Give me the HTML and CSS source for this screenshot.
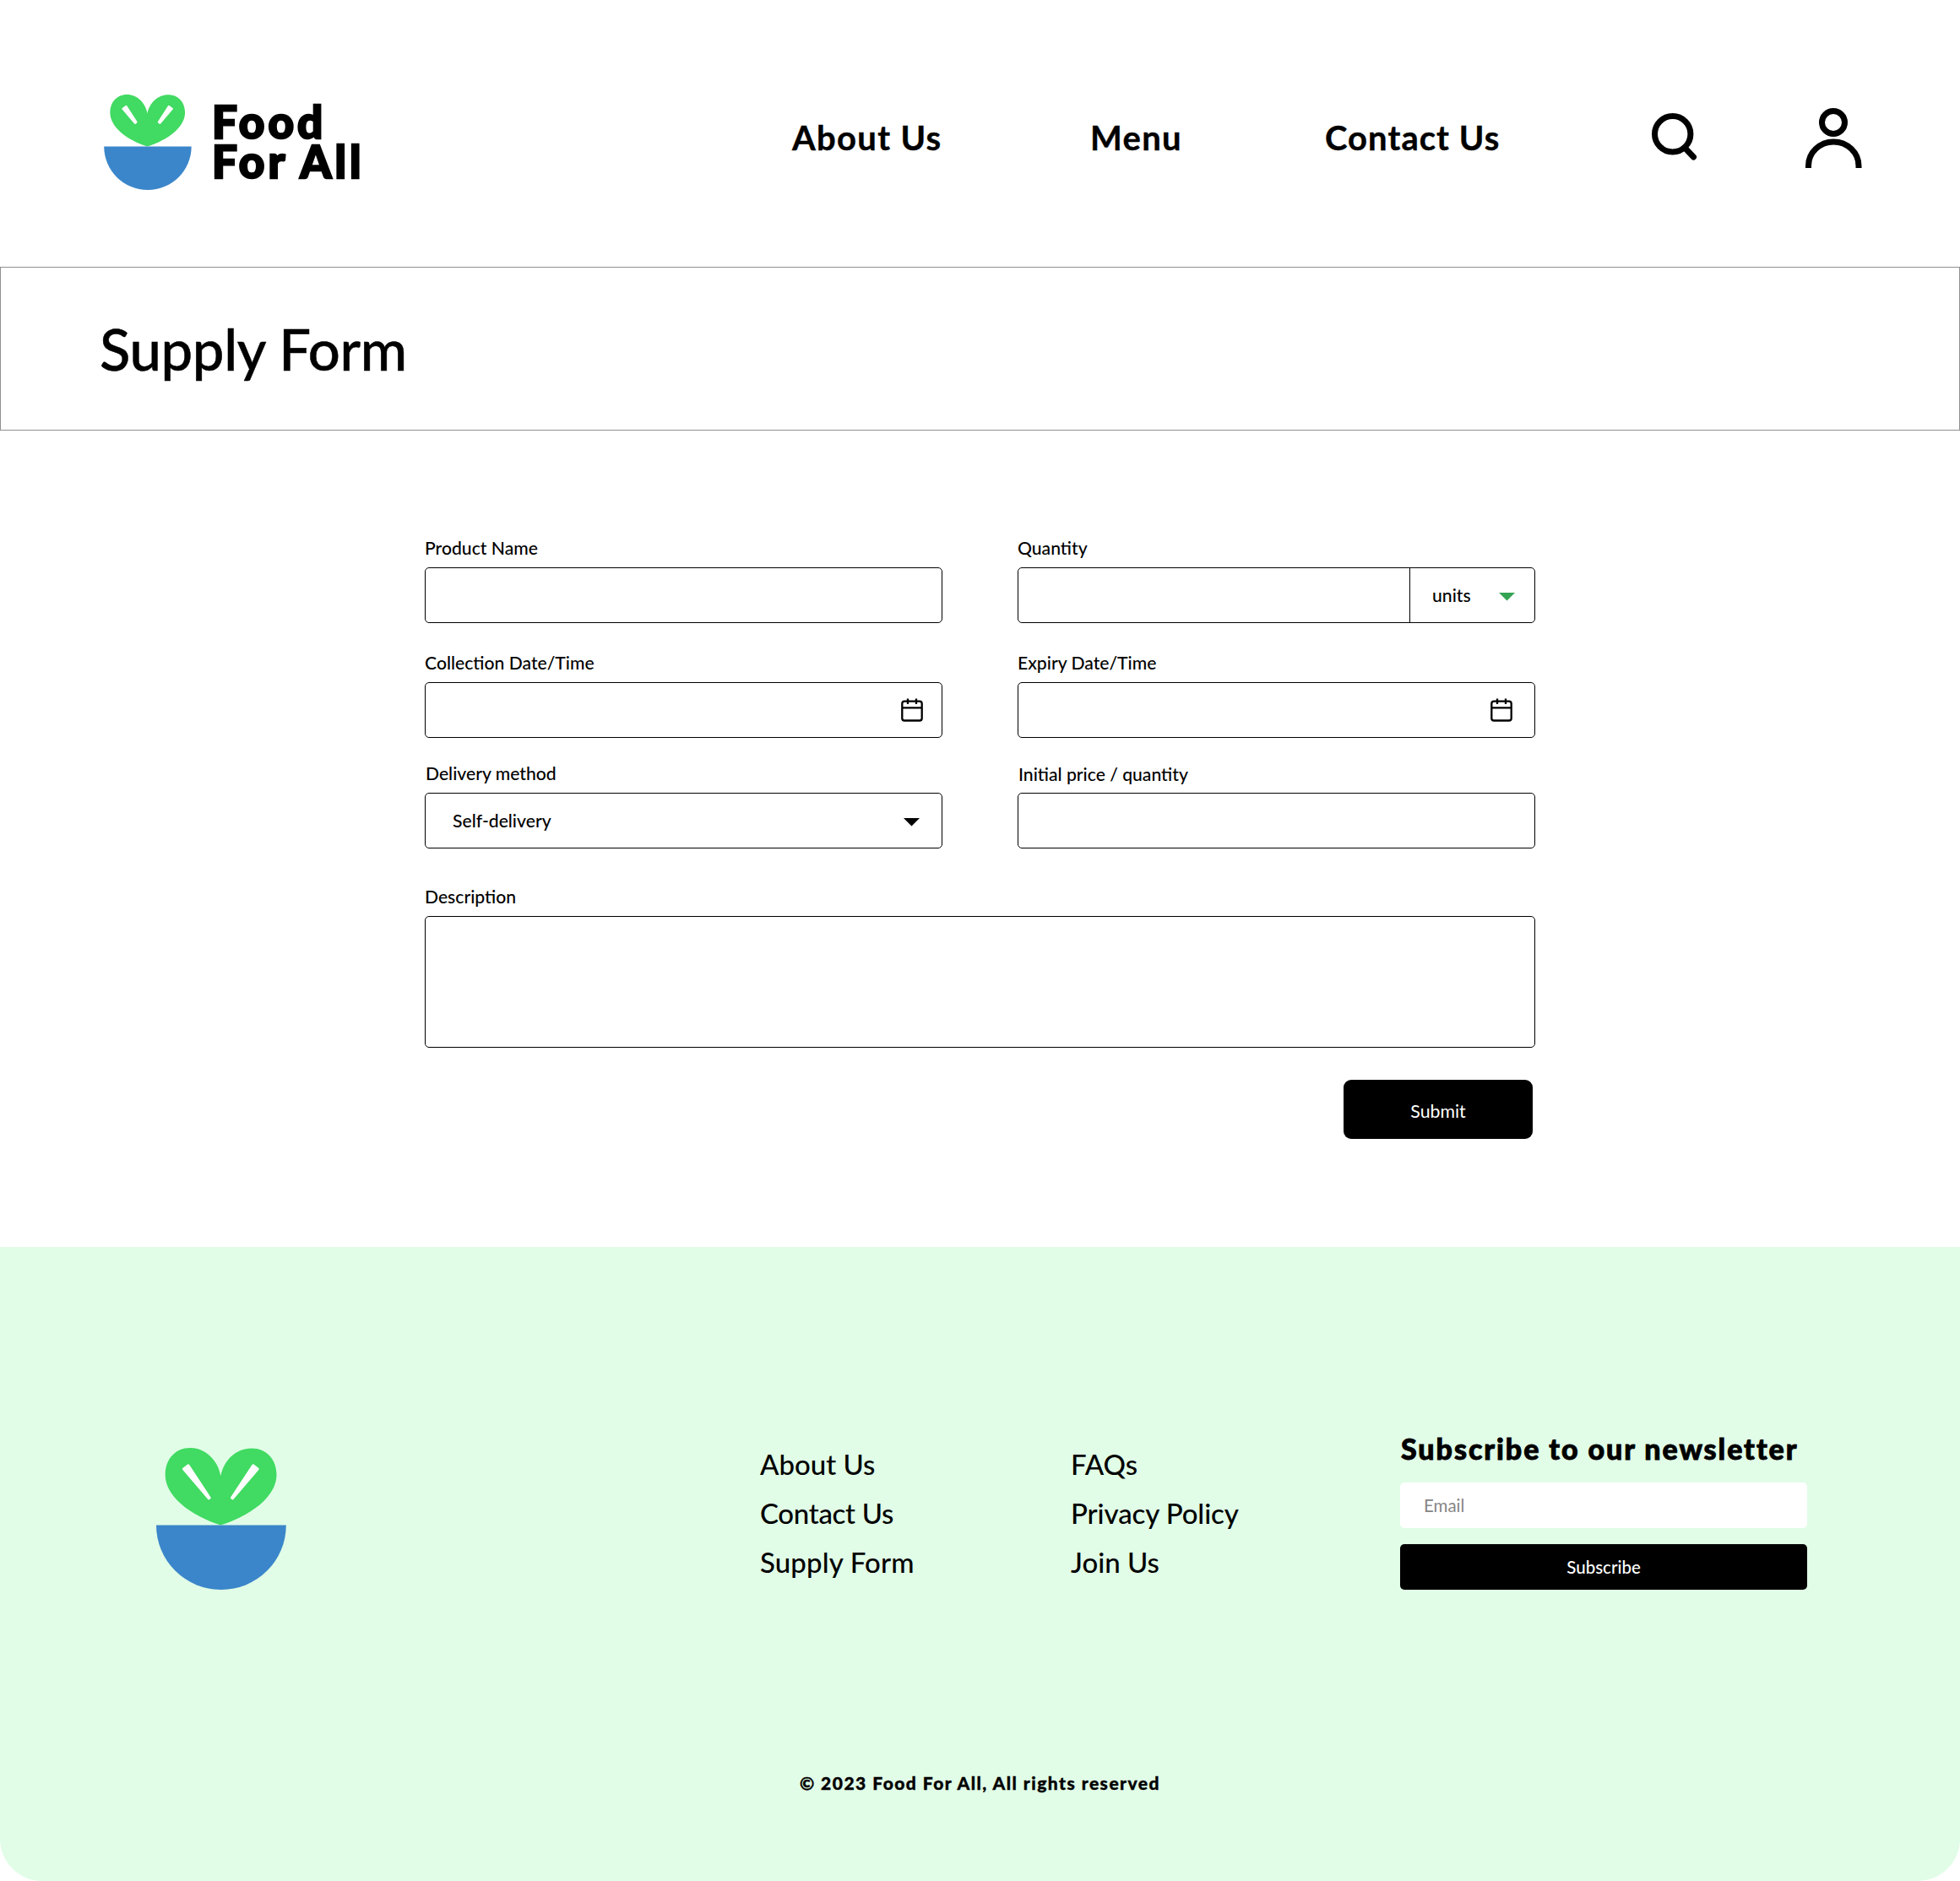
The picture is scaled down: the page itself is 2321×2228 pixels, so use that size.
FILE: index.html
```html
<!DOCTYPE html>
<html lang="en">
<head>
<meta charset="utf-8">
<title>Supply Form - Food For All</title>
<link rel="stylesheet" href="styles.css">
</head>
<body>
<header class="header">
  <a class="brand">
    <svg class="brand-mark" viewBox="0 0 154 168">
      <path fill="#41DA62" d="M76.3 91.5C40 80 10.7 57 10.7 32C10.7 13 23 0 40 0C59 0 73 15 76.3 33.3C80 15 94 .5 113 .5C130 .5 142.5 13 142.5 32C142.5 57 113 80 76.3 91.5Z"/>
      <path fill="#3B86CA" d="M0 91.5H153.8A76.9 76.5 0 0 1 0 91.5Z"/>
      <path fill="#fff" stroke="#fff" stroke-width="3" stroke-linejoin="round" d="M33 25L39 20.5L57 48.5L54.5 50.5ZM120 25L114 20.5L96 48.5L98.500 50.5Z"/>
    </svg>
    <span class="brand-name">Food<br>For All</span>
  </a>
  <a class="nav-link">About Us</a>
  <a class="nav-link">Menu</a>
  <a class="nav-link nav-contact">Contact Us</a>
  <svg class="icon-search" viewBox="0 0 54 58" fill="none" stroke="#000" stroke-width="7">
    <circle cx="24.700" cy="24.700" r="21.200"/>
    <path stroke-linecap="round" d="M40 42L49.500 52"/>
  </svg>
  <svg class="icon-user" viewBox="0 0 67 72" fill="none" stroke="#000" stroke-width="7">
    <circle cx="33" cy="17" r="13.500"/>
    <path d="M3.500 71V68.500A29.700 28.500 0 0 1 63 68.500V71"/>
  </svg>
</header>
<section class="title-bar"><h1 class="title">Supply Form</h1></section>
<main class="main">
  <form class="form">
    <div class="row">
      <div class="field"><label class="label" for="product">Product Name</label><input class="box" id="product"></div>
      <div class="field"><label class="label">Quantity</label>
        <div class="box combo"><span class="combo-units">units<svg class="caret" viewBox="0 0 19 10"><path fill="#34A353" d="M0 0H19L9.500 9.500Z"/></svg></span></div></div>
    </div>
    <div class="row row-dates">
      <div class="field"><label class="label">Collection Date/Time</label>
        <div class="box picker"><svg class="calendar" viewBox="0 0 26 28" fill="none" stroke="#000" stroke-width="2.300"><rect x="1.300" y="3.700" width="23.400" height="22.800" rx="2.800"/><path d="M1.300 11.300H24.700M8 .5V7M18 .5V7"/></svg></div></div>
      <div class="field"><label class="label">Expiry Date/Time</label>
        <div class="box picker picker-expiry"><svg class="calendar" viewBox="0 0 26 28" fill="none" stroke="#000" stroke-width="2.300"><rect x="1.300" y="3.700" width="23.400" height="22.800" rx="2.800"/><path d="M1.300 11.300H24.700M8 .5V7M18 .5V7"/></svg></div></div>
    </div>
    <div class="row row-delivery">
      <div class="field"><label class="label label-delivery">Delivery method</label>
        <div class="box select">Self-delivery<svg class="caret" viewBox="0 0 19 10"><path d="M0 0H19L9.500 9.500Z"/></svg></div></div>
      <div class="field"><label class="label label-price" for="price">Initial price / quantity</label><input class="box" id="price"></div>
    </div>
    <div class="field field-description"><label class="label" for="description">Description</label><textarea class="box description" id="description"></textarea></div>
    <button class="submit" type="button">Submit</button>
  </form>
</main>
<footer class="footer">
  <div class="footer-top">
    <svg class="footer-mark" viewBox="0 0 154 168">
      <path fill="#41DA62" d="M76.3 91.5C40 80 10.7 57 10.7 32C10.7 13 23 0 40 0C59 0 73 15 76.3 33.3C80 15 94 .5 113 .5C130 .5 142.5 13 142.5 32C142.5 57 113 80 76.3 91.5Z"/>
      <path fill="#3B86CA" d="M0 91.5H153.8A76.9 76.5 0 0 1 0 91.5Z"/>
      <path fill="#fff" stroke="#fff" stroke-width="3" stroke-linejoin="round" d="M32.500 25L38 20.800L63.200 59L62.200 59.800ZM120.200 25L114.700 20.800L89.500 59L90.500 59.800Z"/>
    </svg>
    <nav class="links">
      <a>About Us</a>
      <a class="link-contact">Contact Us</a>
      <a class="link-supply">Supply Form</a>
    </nav>
    <nav class="links">
      <a>FAQs</a>
      <a class="link-privacy">Privacy Policy</a>
      <a>Join Us</a>
    </nav>
    <div class="newsletter">
      <h2 class="newsletter-title">Subscribe to our newsletter</h2>
      <div class="email">Email</div>
      <button class="subscribe" type="button">Subscribe</button>
    </div>
  </div>
  <p class="copyright">© 2023 Food For All, All rights reserved</p>
</footer>
</body>
</html>
```
FILE: styles.css
```css
* { box-sizing: border-box; }
body { margin: 0; background: #fff; color: #000; font-family: Lato, sans-serif; }
a { color: inherit; text-decoration: none; }

.header {
  display: grid;
  grid-template-columns: 815px 353px 278px 387px 182px 67px;
  height: 316px;
  padding: 112px 0 0 123px;
  align-items: start;
}
.brand { display: flex; }
.brand-mark { width: 104px; height: 113px; }
.brand-name { margin: 8px 0 0 24px; font-size: 53px; font-weight: 900; line-height: 47px; letter-spacing: 4.1px; white-space: nowrap; -webkit-text-stroke: 2.4px #000; }
.nav-link { padding-top: 26px; font-size: 40px; font-weight: 700; line-height: 50px; letter-spacing: 1.3px; white-space: nowrap; -webkit-text-stroke: 0.4px #000; }
.nav-contact { letter-spacing: 1.05px; }
.icon-search { width: 54px; height: 58px; margin-top: 22px; }
.icon-user { width: 67px; height: 72px; margin-top: 16px; }

.title-bar { height: 194px; padding: 48px 0 0 117px; border: 1px solid #909090; }
.title { margin: 0; font-size: 67px; font-weight: 500; line-height: 96px; letter-spacing: -0.35px; -webkit-text-stroke: 0.5px #000; }

.main { height: 967px; padding: 127px 0 0 503px; }
.form { display: flex; flex-direction: column; width: 1315px; font-size: 21.15px; font-weight: 500; line-height: 24px; }
.row { display: grid; grid-template-columns: 613px 613px; column-gap: 89px; }
.row-dates { margin-top: 35px; }
.row-delivery { margin-top: 30px; }
.field { display: flex; flex-direction: column; }
.field-description { margin-top: 45px; }
.label { height: 35px; }
.label-delivery { padding-left: 1px; }
.label-price { padding: 1px 0 0 1px; }
.box { display: flex; align-items: center; width: 100%; height: 66px; border: 1px solid #000; border-radius: 5px; background: #fff; }
.combo { justify-content: flex-end; }
.combo-units { display: flex; align-items: center; justify-content: space-between; width: 148px; height: 64px; padding: 0 23px 1px 26px; border-left: 1px solid #000; }
.caret { width: 19px; height: 10px; margin-top: 5px; }
.picker { justify-content: flex-end; padding-right: 22.5px; }
.picker-expiry { padding-right: 26px; }
.calendar { width: 26px; height: 28px; }
.select { justify-content: space-between; padding: 0 26px 1px 32px; }
.description { height: 156px; resize: none; }
.submit { align-self: flex-end; width: 224px; height: 70px; margin: 38px 3px 0 0; padding: 3px 0 0; border: 0; border-radius: 9px; background: #000; color: #fff; font: 400 21.3px/24px Lato, sans-serif; }

.footer { height: 751px; padding-top: 217px; border-radius: 0 0 50px 50px; background: #E1FDE7; }
.footer-top { display: grid; grid-template-columns: 715px 368px 390px 482px; height: 393px; padding-left: 185px; align-items: start; }
.footer-mark { width: 154px; height: 168px; margin-top: 21px; }
.links { display: flex; flex-direction: column; padding-top: 11px; font-size: 33px; font-weight: 500; line-height: 58px; white-space: nowrap; }
.link-contact { letter-spacing: -0.3px; }
.link-supply { letter-spacing: 0.15px; }
.link-privacy { letter-spacing: -0.1px; }
.newsletter { display: flex; flex-direction: column; }
.newsletter-title { margin: 0; height: 62px; padding-left: 1px; font-size: 34px; font-weight: 900; line-height: 44px; letter-spacing: 1.93px; white-space: nowrap; -webkit-text-stroke: 0.9px #000; }
.email { height: 54px; padding-left: 28px; border-radius: 5px; background: #fff; color: #868686; font-size: 20.5px; line-height: 54px; }
.subscribe { height: 54px; margin-top: 19px; padding: 0; border: 0; border-radius: 5px; background: #000; color: #fff; font: 500 20.5px/54px Lato, sans-serif; }
.copyright { margin: 0; text-align: center; font-size: 21px; font-weight: 900; line-height: 50px; letter-spacing: 1.48px; -webkit-text-stroke: 0.4px #000; }
```
